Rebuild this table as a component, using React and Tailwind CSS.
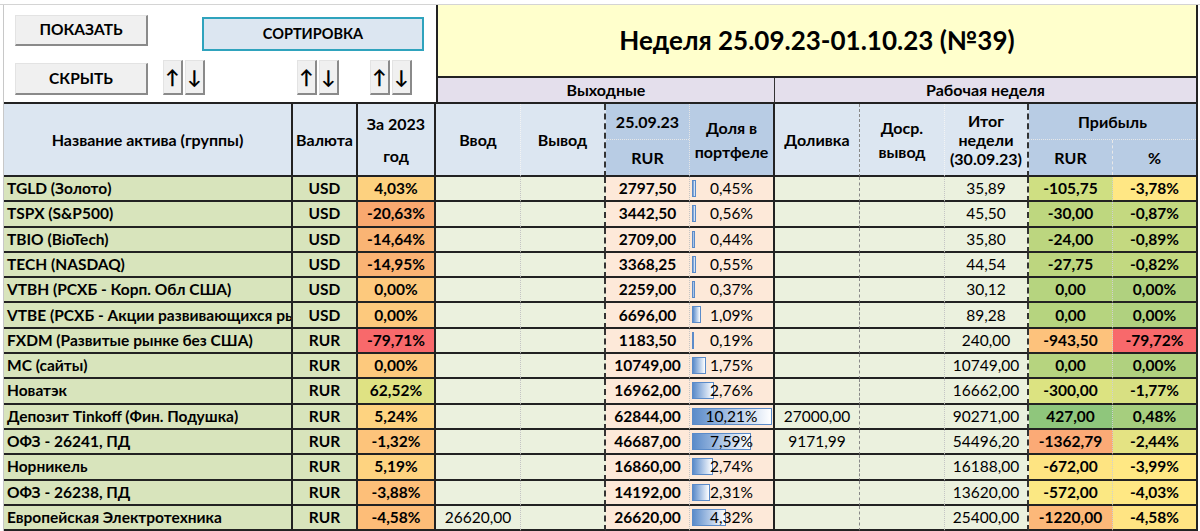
import React from 'react';

const font = { fontFamily: '"Lato", "Open Sans", "Noto Sans", sans-serif' };

const cols = 'grid-cols-[289px_65px_78px_85px_85px_84px_85px_85px_85px_84px_84px_85px]';

const rows = [
  { name: 'TGLD (Золото)', cur: 'USD', y: '4,03%', yc: 'bg-[#fdd17f]', d: '2797,50', dol: 0.45, dolS: '0,45%', itog: '35,89', pr: '-105,75', prc: 'bg-[#cfdf82]', pp: '-3,78%', ppc: 'bg-[#ffe784]' },
  { name: 'TSPX (S&P500)', cur: 'USD', y: '-20,63%', yc: 'bg-[#f9a86f]', d: '3442,50', dol: 0.56, dolS: '0,56%', itog: '45,50', pr: '-30,00', prc: 'bg-[#bed77f]', pp: '-0,87%', ppc: 'bg-[#c4d980]' },
  { name: 'TBIO (BioTech)', cur: 'USD', y: '-14,64%', yc: 'bg-[#fab474]', d: '2709,00', dol: 0.44, dolS: '0,44%', itog: '35,80', pr: '-24,00', prc: 'bg-[#bcd67f]', pp: '-0,89%', ppc: 'bg-[#c4d980]' },
  { name: 'TECH (NASDAQ)', cur: 'USD', y: '-14,95%', yc: 'bg-[#fab374]', d: '3368,25', dol: 0.55, dolS: '0,55%', itog: '44,54', pr: '-27,75', prc: 'bg-[#bdd67f]', pp: '-0,82%', ppc: 'bg-[#c2d980]' },
  { name: 'VTBH (РСХБ - Корп. Обл США)', cur: 'USD', y: '0,00%', yc: 'bg-[#fdc97d]', d: '2259,00', dol: 0.37, dolS: '0,37%', itog: '30,12', pr: '0,00', prc: 'bg-[#b6d47f]', pp: '0,00%', ppc: 'bg-[#b0d17f]' },
  { name: 'VTBE (РСХБ - Акции развивающихся рынков)', cur: 'USD', y: '0,00%', yc: 'bg-[#fdc97d]', d: '6696,00', dol: 1.09, dolS: '1,09%', itog: '89,28', pr: '0,00', prc: 'bg-[#b6d47f]', pp: '0,00%', ppc: 'bg-[#b0d17f]' },
  { name: 'FXDM (Развитые рынке без США)', cur: 'RUR', y: '-79,71%', yc: 'bg-[#f8696b]', d: '1183,50', dol: 0.19, dolS: '0,19%', itog: '240,00', pr: '-943,50', prc: 'bg-[#fdc27c]', pp: '-79,72%', ppc: 'bg-[#f8696b]' },
  { name: 'МС (сайты)', cur: 'RUR', y: '0,00%', yc: 'bg-[#fdc97d]', d: '10749,00', dol: 1.75, dolS: '1,75%', itog: '10749,00', pr: '0,00', prc: 'bg-[#b6d47f]', pp: '0,00%', ppc: 'bg-[#b0d17f]' },
  { name: 'Новатэк', cur: 'RUR', y: '62,52%', yc: 'bg-[#dfe283]', d: '16962,00', dol: 2.76, dolS: '2,76%', itog: '16662,00', pr: '-300,00', prc: 'bg-[#dce381]', pp: '-1,77%', ppc: 'bg-[#d8e082]' },
  { name: 'Депозит Tinkoff (Фин. Подушка)', cur: 'RUR', y: '5,24%', yc: 'bg-[#fed380]', d: '62844,00', dol: 10.21, dolS: '10,21%', doliv: '27000,00', itog: '90271,00', pr: '427,00', prc: 'bg-[#8fc67c]', pp: '0,48%', ppc: 'bg-[#a6ce7e]' },
  { name: 'ОФЗ - 26241, ПД', cur: 'RUR', y: '-1,32%', yc: 'bg-[#fdc47b]', d: '46687,00', dol: 7.59, dolS: '7,59%', doliv: '9171,99', itog: '54496,20', pr: '-1362,79', prc: 'bg-[#fbaa76]', pp: '-2,44%', ppc: 'bg-[#e4e383]' },
  { name: 'Норникель', cur: 'RUR', y: '5,19%', yc: 'bg-[#fed380]', d: '16860,00', dol: 2.74, dolS: '2,74%', itog: '16188,00', pr: '-672,00', prc: 'bg-[#fee482]', pp: '-3,99%', ppc: 'bg-[#ffe884]' },
  { name: 'ОФЗ - 26238, ПД', cur: 'RUR', y: '-3,88%', yc: 'bg-[#fdbf79]', d: '14192,00', dol: 2.31, dolS: '2,31%', itog: '13620,00', pr: '-572,00', prc: 'bg-[#fbe883]', pp: '-4,03%', ppc: 'bg-[#ffe884]' },
  { name: 'Европейская Электротехника', cur: 'RUR', y: '-4,58%', yc: 'bg-[#fdbd78]', vvod: '26620,00', d: '26620,00', dol: 4.32, dolS: '4,32%', itog: '25400,00', pr: '-1220,00', prc: 'bg-[#fcb879]', pp: '-4,58%', ppc: 'bg-[#ffe483]' },
];

function XlButton({ children, className }) {
  return (
    <div
      className={`flex items-center justify-center bg-[#f0f0f0] border border-[#e3e3e3] border-r-2 border-b-2 border-r-[#8a8a8a] border-b-[#8a8a8a] font-bold text-black ${className}`}
    >
      {children}
    </div>
  );
}

function Arrows() {
  return (
    <div className="flex gap-[2px]">
      <XlButton className="w-[20px] h-[35px] text-[19px]">↑</XlButton>
      <XlButton className="w-[20px] h-[35px] text-[19px]">↓</XlButton>
    </div>
  );
}

function DataRow({ r }) {
  const cell = 'h-[25.3px] border-b-2 border-b-[#222] flex items-center text-[15.5px] text-black overflow-hidden whitespace-nowrap';
  const barW = (r.dol / 10.21) * 80;
  return (
    <>
      <div className={`${cell} bg-[#d8e4bc] border-r-2 border-r-[#222] font-bold pl-[3px]`}>{r.name}</div>
      <div className={`${cell} bg-[#d8e4bc] border-r-2 border-r-[#222] font-bold justify-center`}>{r.cur}</div>
      <div className={`${cell} ${r.yc} border-r-2 border-r-[#222] font-bold justify-center`}>{r.y}</div>
      <div className={`${cell} bg-[#ebf1de] border-r border-r-[#c4c4c4] [border-right-style:dotted] justify-center`}>{r.vvod || ''}</div>
      <div className={`${cell} bg-[#ebf1de] border-r-2 border-r-[#333] [border-right-style:dashed] justify-center`}></div>
      <div className={`${cell} bg-[#fde9d9] border-r border-r-[#c4c4c4] [border-right-style:dotted] font-bold justify-center`}>{r.d}</div>
      <div className={`${cell} bg-[#fde9d9] border-r-2 border-r-[#222] relative justify-center`}>
        <div
          className="absolute left-[2px] top-[3px] h-[17px] border border-[#5b8bc9] bg-gradient-to-r from-[#5b8bc9] to-white"
          style={{ width: barW }}
        />
        <span className="relative">{r.dolS}</span>
      </div>
      <div className={`${cell} bg-[#ebf1de] border-r border-r-[#888] [border-right-style:dashed] justify-center`}>{r.doliv || ''}</div>
      <div className={`${cell} bg-[#ebf1de] border-r border-r-[#c4c4c4] [border-right-style:dotted] justify-center`}></div>
      <div className={`${cell} bg-[#ebf1de] border-r-2 border-r-[#333] [border-right-style:dashed] justify-center`}>{r.itog}</div>
      <div className={`${cell} ${r.prc} border-r border-r-[#d0d0d0] [border-right-style:dotted] font-bold justify-center`}>{r.pr}</div>
      <div className={`${cell} ${r.ppc} border-r-2 border-r-[#222] font-bold justify-center`}>{r.pp}</div>
    </>
  );
}

export default function App() {
  const head = 'h-[73px] border-b-2 border-b-[#222] flex items-center justify-center text-center text-[16px] font-bold text-black leading-[19px]';
  return (
    <div className="w-[1200px] h-[531px] overflow-hidden bg-white" style={font}>
      <div className="h-[5px] border-b border-[#d4d4d4]" />
      <div className="pl-[3px]">
        <div className={`grid ${cols} border-l border-[#c8c8c8]`}>
          {/* control panel */}
          <div className="col-span-3 row-span-2 bg-white border-b-2 border-b-[#222] flex flex-col pl-[11px] pt-[10px]">
            <div className="flex items-start">
              <XlButton className="w-[133px] h-[31px] text-[15.5px]">ПОКАЗАТЬ</XlButton>
              <div className="ml-[54px] mt-[2px] w-[222px] h-[34px] bg-[#dce6f1] border-2 border-[#2fa3bd] flex items-center justify-center text-[14.5px] font-bold text-black">
                СОРТИРОВКА
              </div>
            </div>
            <div className="flex items-start mt-[9px]">
              <XlButton className="w-[133px] h-[32px] mt-[3px] text-[15.5px]">СКРЫТЬ</XlButton>
              <div className="ml-[15px]"><Arrows /></div>
              <div className="ml-[92px]"><Arrows /></div>
              <div className="ml-[31px]"><Arrows /></div>
            </div>
          </div>

          {/* title */}
          <div className="col-span-9 h-[73px] bg-[#ffffcc] border-l-2 border-l-[#222] border-r-2 border-r-[#222] border-b-2 border-b-[#222] flex items-center justify-center text-[26px] font-bold text-black">
            Неделя 25.09.23-01.10.23 (№39)
          </div>

          {/* section row */}
          <div className="col-span-4 h-[26px] bg-[#e4dfec] border-l-2 border-l-[#222] border-r border-r-[#333] border-b-2 border-b-[#222] flex items-center justify-center text-[16px] font-bold text-black">
            Выходные
          </div>
          <div className="col-span-5 h-[26px] bg-[#e4dfec] border-r-2 border-r-[#222] border-b-2 border-b-[#222] flex items-center justify-center text-[16px] font-bold text-black">
            Рабочая неделя
          </div>

          {/* header row */}
          <div className={`${head} bg-[#dce6f1] border-r-2 border-r-[#222]`}>Название актива (группы)</div>
          <div className={`${head} bg-[#dce6f1] border-r-2 border-r-[#222]`}>Валюта</div>
          <div className={`${head} bg-[#dce6f1] border-r-2 border-r-[#222] leading-[32px]`}>За 2023<br />год</div>
          <div className={`${head} bg-[#dce6f1] border-r border-r-[#f4f4f4] [border-right-style:dotted]`}>Ввод</div>
          <div className={`${head} bg-[#dce6f1] border-r-2 border-r-[#333] [border-right-style:dashed]`}>Вывод</div>
          <div className={`${head} bg-[#b8cce4] border-r border-r-[#e6e6e6] [border-right-style:dotted] flex-col`}>
            <div className="h-[36px] w-full flex items-center justify-center border-b border-[#e8e8e8] border-dotted">25.09.23</div>
            <div className="flex-1 w-full flex items-center justify-center">RUR</div>
          </div>
          <div className={`${head} bg-[#b8cce4] border-r-2 border-r-[#222] leading-[24px]`}>Доля в<br />портфеле</div>
          <div className={`${head} bg-[#dce6f1] border-r border-r-[#888] [border-right-style:dashed]`}>Доливка</div>
          <div className={`${head} bg-[#dce6f1] border-r border-r-[#f4f4f4] [border-right-style:dotted] leading-[24px]`}>Доср.<br />вывод</div>
          <div className={`${head} bg-[#dce6f1] border-r-2 border-r-[#333] [border-right-style:dashed]`}>Итог<br />недели<br />(30.09.23)</div>
          <div className={`${head} col-span-2 bg-[#b8cce4] border-r-2 border-r-[#222] flex-col`}>
            <div className="h-[36px] w-full flex items-center justify-center border-b border-[#e8e8e8] border-dotted">Прибыль</div>
            <div className="flex-1 w-full flex">
              <div className="w-[84px] flex items-center justify-center border-r border-[#e8e8e8] border-dashed">RUR</div>
              <div className="flex-1 flex items-center justify-center">%</div>
            </div>
          </div>

          {rows.map((r) => (
            <DataRow key={r.name} r={r} />
          ))}
        </div>
      </div>
    </div>
  );
}
